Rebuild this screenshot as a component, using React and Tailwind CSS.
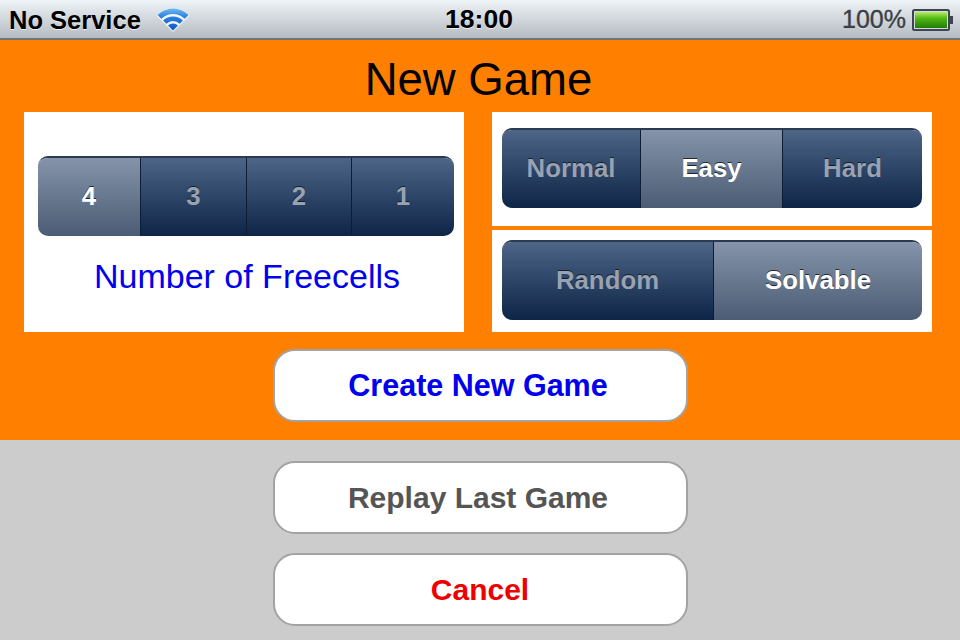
const font = { fontFamily: '"Liberation Sans", Arial, sans-serif' };

function WifiIcon() {
  return (
    <svg width="34" height="26" viewBox="0 0 34 26" className="block">
      <defs>
        <linearGradient id="wifi" gradientUnits="userSpaceOnUse" x1="0" y1="1" x2="0" y2="24">
          <stop offset="0" stopColor="#6cb6f0" />
          <stop offset="0.35" stopColor="#2a80e2" />
          <stop offset="1" stopColor="#0b50c8" />
        </linearGradient>
      </defs>
      <g transform="translate(1 1)">
        <path d="M16 24 L-0.6 7.4 A23.5 23.5 0 0 1 32.6 7.4 Z" fill="#fff" opacity="0.75" />
        <path d="M16 22.5 L11.05 17.55 A7 7 0 0 1 20.95 17.55 Z" fill="url(#wifi)" />
        <path d="M6.1 12.6 A14 14 0 0 1 25.9 12.6 L22.72 15.78 A9.5 9.5 0 0 0 9.28 15.78 Z" fill="url(#wifi)" />
        <path d="M0.44 6.94 A22 22 0 0 1 31.56 6.94 L27.67 10.83 A16.5 16.5 0 0 0 4.33 10.83 Z" fill="url(#wifi)" />
      </g>
    </svg>
  );
}

function BatteryIcon() {
  return (
    <svg width="42" height="22" viewBox="0 0 42 22" className="block">
      <defs>
        <linearGradient id="charge" x1="0" y1="0" x2="0" y2="1">
          <stop offset="0" stopColor="#b4ec6c" />
          <stop offset="0.4" stopColor="#54b812" />
          <stop offset="1" stopColor="#207c06" />
        </linearGradient>
      </defs>
      <rect x="1" y="1" width="36" height="20" rx="1.5" fill="#d4d9de" stroke="#3d4550" strokeWidth="2" />
      <rect x="3" y="3" width="32" height="16" fill="url(#charge)" />
      <path d="M38 7 H41 V15 H38 Z" fill="#3d4550" />
    </svg>
  );
}

function StatusBar() {
  return (
    <div className="flex h-10 items-center justify-between border-b-2 border-[#6f7478] bg-gradient-to-b from-[#eef3f7] to-[#b5bcc2] pl-[9px] pr-[6px] pt-[2px]">
      <div className="flex w-[300px] items-center gap-[15px]">
        <span className="text-[25.5px] font-bold text-black [text-shadow:0_1px_0_rgba(255,255,255,0.7)]">No Service</span>
        <WifiIcon />
      </div>
      <span className="pr-[5px] text-[26.5px] font-bold text-black [text-shadow:0_1px_0_rgba(255,255,255,0.7)]">18:00</span>
      <div className="flex w-[300px] items-center justify-end gap-[6px]">
        <span className="text-[25px] text-[#3a3f46] [text-shadow:0_1px_0_rgba(255,255,255,0.7)] [-webkit-text-stroke:0.4px_#3a3f46]">100%</span>
        <BatteryIcon />
      </div>
    </div>
  );
}

function Segments({ items, selected }) {
  return (
    <div className="flex h-20 overflow-hidden rounded-[10px] border-t-2 border-t-[#2b3a50]">
      {items.map((item, i) => {
        const isOn = i === selected;
        return (
          <div
            key={item.label}
            style={{ width: item.width }}
            className={
              'flex shrink-0 items-center justify-center border-r border-r-[#0e1d36] pb-[2px] last:border-r-0 text-[25.8px] font-bold ' +
              (isOn
                ? 'bg-gradient-to-b from-[#8594aa] to-[#4b5c74] text-white [text-shadow:0_-1px_0_rgba(0,0,0,0.7)]'
                : 'bg-gradient-to-b from-[#4d6687] to-[#0e2547] text-[#98a2b2] [text-shadow:0_-1px_0_rgba(0,0,0,0.6)]')
            }
          >
            {item.label}
          </div>
        );
      })}
    </div>
  );
}

function ActionButton({ color, children }) {
  return (
    <button className={'flex h-[73px] w-[415px] items-center justify-center rounded-[22px] border-2 border-[#a3a3a3] bg-white pr-[4px] font-bold ' + color}>
      {children}
    </button>
  );
}

export default function App() {
  return (
    <div style={font} className="flex h-[640px] w-[960px] flex-col overflow-hidden bg-[#cccccc]">
      <StatusBar />

      <div className="flex h-[400px] flex-col items-center bg-[#ff8000]">
        <h1 className="flex h-[72px] items-center pr-[3px] pt-[8px] text-[45.5px] font-normal text-black">New Game</h1>

        <div className="flex w-full gap-[28px] px-6">
          <div className="flex h-[220px] w-[440px] flex-col bg-white pl-[14px] pr-[10px] pt-[44px]">
            <Segments
              selected={0}
              items={[
                { label: '4', width: 103 },
                { label: '3', width: 106 },
                { label: '2', width: 105 },
                { label: '1', width: 102 },
              ]}
            />
            <p className="mt-[18px] pl-[2px] text-center text-[34px] leading-[44px] text-[#0000ee]">Number of Freecells</p>
          </div>

          <div className="flex w-[440px] flex-col gap-1">
            <div className="h-[114px] bg-white px-[10px] pt-4">
              <Segments
                selected={1}
                items={[
                  { label: 'Normal', width: 139 },
                  { label: 'Easy', width: 142 },
                  { label: 'Hard', width: 139 },
                ]}
              />
            </div>
            <div className="h-[102px] bg-white px-[10px] pt-[10px]">
              <Segments
                selected={1}
                items={[
                  { label: 'Random', width: 212 },
                  { label: 'Solvable', width: 208 },
                ]}
              />
            </div>
          </div>
        </div>

        <div className="mt-[17px]">
          <ActionButton color="text-[30.5px] text-[#0000ee]">Create New Game</ActionButton>
        </div>
      </div>

      <div className="flex flex-col items-center gap-[19px] pt-[21px]">
        <ActionButton color="text-[30px] text-[#555555]">Replay Last Game</ActionButton>
        <ActionButton color="text-[30px] text-[#ee0000]">
          <span className="pl-[4px]">Cancel</span>
        </ActionButton>
      </div>
    </div>
  );
}
